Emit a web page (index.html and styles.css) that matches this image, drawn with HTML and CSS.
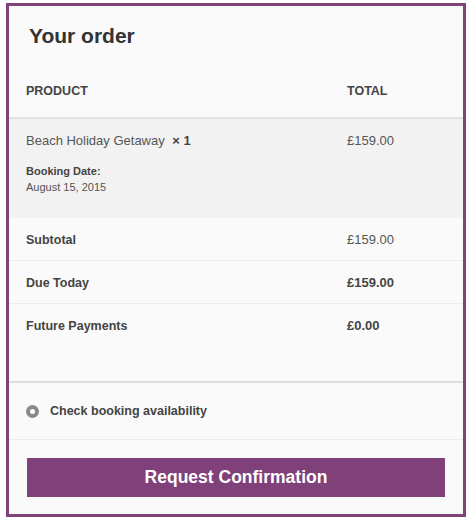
FILE: index.html
```html
<!DOCTYPE html>
<html lang="en">
<head>
  <meta charset="UTF-8">
  <meta name="viewport" content="width=device-width, initial-scale=1.0">
  <title>Your order</title>
  <link rel="stylesheet" href="styles.css">
</head>

<body>
  <div class="order">
    <h2 class="title">Your order</h2>

    <div class="row head">
      <span>Product</span>
      <span>Total</span>
    </div>

    <div class="row item">
      <div>
        <div class="name">Beach Holiday Getaway <strong class="qty">&times; 1</strong></div>
        <div class="meta">
          <strong>Booking Date:</strong>
          <span>August 15, 2015</span>
        </div>
      </div>
      <div class="name">&pound;159.00</div>
    </div>

    <div class="row sum">
      <strong>Subtotal</strong>
      <span>&pound;159.00</span>
    </div>
    <div class="row sum">
      <strong>Due Today</strong>
      <strong>&pound;159.00</strong>
    </div>
    <div class="row sum last">
      <strong>Future Payments</strong>
      <strong>&pound;0.00</strong>
    </div>

    <div class="choice">
      <input type="radio" name="payment" id="check" checked>
      <label for="check">Check booking availability</label>
    </div>

    <div class="actions">
      <button type="submit">Request Confirmation</button>
    </div>
  </div>
</body>
</html>
```

FILE: styles.css
```css
 body{
   margin:0;
   font-family:"Liberation Sans", Arial, sans-serif;
   color:#555;
   background:#fff;
 }

 .order{
   width:454px;
   margin:3px 0 0 6px;
   border:3px solid #7e4479;
   background:#fafafa;
 }

 .title{
   margin:0;
   padding:18px 20px 0;
   font-size:21px;
   line-height:24px;
   color:#333;
 }

 .row{
   display:grid;
   grid-template-columns:321px 1fr;
   padding-left:17px;
 }

 .head{
   padding-top:35px;
   padding-bottom:18px;
   border-bottom:2px solid #e1e1e1;
   font-size:12.5px;
   line-height:16px;
   font-weight:bold;
   text-transform:uppercase;
   color:#444;
 }

 .item{
   background:#f2f2f2;
   padding-top:13px;
   padding-bottom:23px;
 }
 .name{
   font-size:13px;
   line-height:18px;
 }
 .qty{
   margin-left:4px;
   color:#444;
 }
 .meta{
   margin-top:13px;
   font-size:11px;
   line-height:16px;
 }
 .meta strong{
   display:block;
   color:#444;
 }

 .sum{
   padding-top:13px;
   padding-bottom:11px;
   border-bottom:1px solid #ececec;
   font-size:12.5px;
   line-height:18px;
 }
 .sum span{font-size:13px;}
 .sum strong{color:#444;}
 .sum strong + strong{font-size:13px;}
 .sum.last{
   padding-bottom:46px;
   border-bottom:2px solid #dedede;
 }

 .choice{
   display:flex;
   align-items:center;
   padding:19px 17px;
   border-bottom:1px solid #ececec;
   font-size:12.5px;
   line-height:18px;
   font-weight:bold;
   color:#444;
 }
 .choice input{
   appearance:none;
   margin:0 11px 0 0;
   width:13px;
   height:13px;
   border-radius:50%;
   background:#8a8a8a;
   display:flex;
   align-items:center;
   justify-content:center;
 }
 .choice input:checked:before{
   content:"";
   width:5px;
   height:5px;
   border-radius:50%;
   background:#fff;
 }

 .actions{
   padding:18px 18px 17px;
 }
 .actions button{
   display:block;
   width:100%;
   height:39px;
   border:none;
   background:#80407a;
   color:#fff;
   font-family:inherit;
   font-size:17.5px;
   font-weight:bold;
 }
```
